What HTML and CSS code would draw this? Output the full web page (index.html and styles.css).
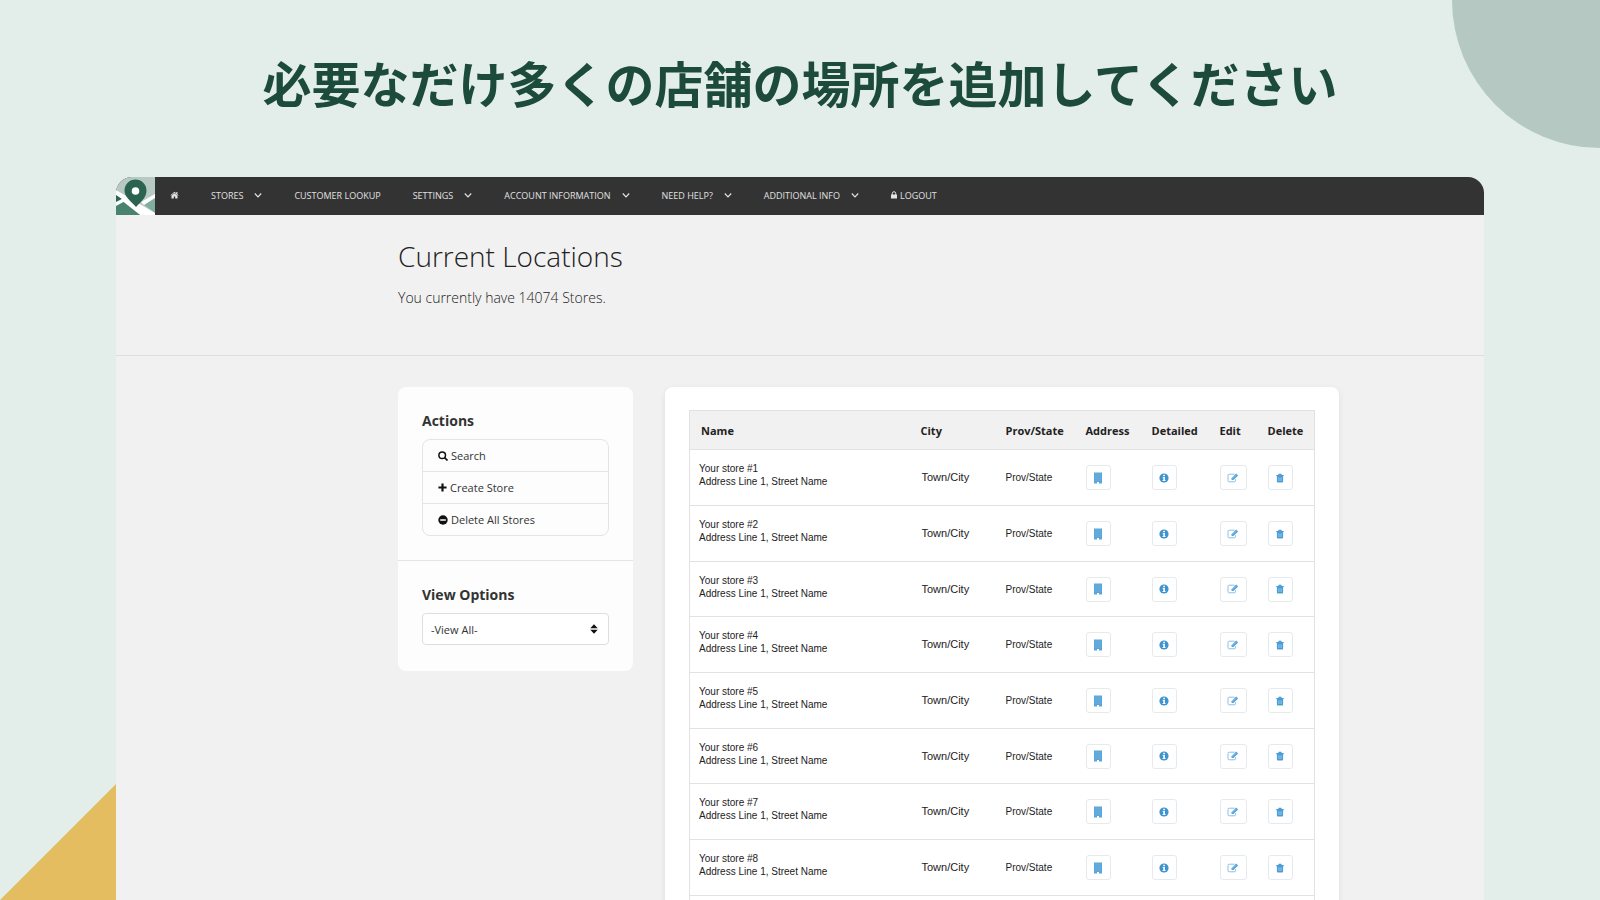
FILE: index.html
```html
<!DOCTYPE html>
<html lang="ja">
<head>
<meta charset="utf-8">
<title>Current Locations</title>
<link rel="stylesheet" href="styles.css">
</head>
<body>
<svg class="symbols" aria-hidden="true">
  <symbol id="chevron" viewBox="0 0 8 10"><path d="M.8 3.500 4 6.800 7.200 3.500" fill="none" stroke="currentColor" stroke-width="1.200"/></symbol>
  <symbol id="building" viewBox="0 0 10 12"><path d="M1 .5h8v11H6V10H4v1.500H1z" fill="#5aa6db"/><path d="M2.500 2.200h5M2.500 4.200h5M2.500 6.200h5M2.500 8.200h5" stroke="#86bfe6" stroke-width=".7" stroke-dasharray="1 1"/></symbol>
  <symbol id="info" viewBox="0 0 10 10"><circle cx="5" cy="5" r="4.600" fill="#3f93cf"/><path d="M4.200 1.800h1.700v1.400H4.200zM3.700 4.100h2.200v3h.6v1H3.600v-1h.7v-2h-.6z" fill="#fff"/></symbol>
  <symbol id="edit" viewBox="0 0 12 10"><path d="M7.500 1.200H2.300Q1 1.200 1 2.500v5Q1 8.800 2.300 8.800h5Q8.600 8.800 8.600 7.500V6.200" fill="none" stroke="#7db7e3" stroke-width=".9"/><path d="M4.600 5.200 9.200.6l1.900 1.800L6.400 7.100H4.600z" fill="#4a9dd6"/><path d="M5.300 5.900 9.600 1.800" stroke="#cfe5f5" stroke-width=".5"/></symbol>
  <symbol id="trash" viewBox="0 0 10 10"><path d="M1.200 2h2L3.700.7h2.600L6.800 2h2v1H1.200z" fill="#4a9dd6"/><path d="M1.900 3h6.200v5.500q0 1-1 1H2.900q-1 0-1-1z" fill="#4a9dd6"/><path d="M3.700 4.300v3.700M5 4.300v3.700M6.300 4.300v3.700" stroke="#a9d1ee" stroke-width=".6"/></symbol>
</svg>
<div class="circle"></div>
<div class="triangle"></div>
<h1 class="headline">必要なだけ多くの店舗の場所を追加してください</h1>
<div class="app">
  <nav class="nav">
    <a class="logo" href="#" aria-label="Store locator">
      <svg viewBox="0 0 39 38" preserveAspectRatio="none">
        <rect width="39" height="38" fill="#b6cac3"/>
        <path d="M0 20 39 42V38H0z" fill="#488370"/>
        <path d="M27 27 39 19v17z" fill="#7fae9f"/>
        <path d="M0 13 39 36v5H28L0 19z" fill="#fff"/>
        <path d="M25 25 39 17v4L28 28z" fill="#fff"/>
        <path d="M0 18 6 22 0 26z" fill="#2b6552"/>
        <path d="M0 25 8 21l3 2L0 29z" fill="#fff"/>
        <path d="M20 30C14 23 8.500 20 8.500 13.500a11 11 0 0 1 22 0C30.500 20 26 24 20 30z" fill="#2b6350"/>
        <circle cx="19.500" cy="14" r="3.800" fill="#fff"/>
      </svg>
    </a>
    <a href="#" aria-label="Home"><svg class="home" viewBox="0 0 10 9"><path d="M5 .8.5 4.700l.6.6L5 2l3.900 3.300.6-.6L8.300 3.600V1H7v1.500z" fill="#e4e4e4"/><path d="M5 2.500 1.600 5.300v3.200h2.600V6.200h1.600v2.300h2.600V5.300z" fill="#e4e4e4"/></svg></a>
    <a href="#">STORES<svg class="chev"><use href="#chevron"/></svg></a>
    <a href="#">CUSTOMER LOOKUP</a>
    <a href="#">SETTINGS<svg class="chev"><use href="#chevron"/></svg></a>
    <a href="#">ACCOUNT INFORMATION<svg class="chev"><use href="#chevron"/></svg></a>
    <a href="#">NEED HELP?<svg class="chev"><use href="#chevron"/></svg></a>
    <a href="#">ADDITIONAL INFO<svg class="chev"><use href="#chevron"/></svg></a>
    <a href="#"><svg class="lock" viewBox="0 0 6 8"><path d="M0 3.500h6V7.500H0z" fill="#e4e4e4"/><path d="M1.300 4V2.400a1.700 1.700 0 0 1 3.400 0V4" fill="none" stroke="#e4e4e4" stroke-width="1"/></svg>LOGOUT</a>
  </nav>
  <header class="intro">
    <h2>Current Locations</h2>
    <p>You currently have 14074 Stores.</p>
  </header>
  <main class="content">
    <aside class="sidebar">
      <section>
        <h3>Actions</h3>
        <ul class="actions">
          <li><a href="#"><svg viewBox="0 0 10 10"><circle cx="4.200" cy="4.200" r="3.300" fill="none" stroke="#111" stroke-width="1.500"/><path d="M6.500 6.500 9.500 9.500" stroke="#111" stroke-width="1.700"/></svg>Search</a></li>
          <li><a href="#"><svg class="plus" viewBox="0 0 10 10"><path d="M5 .5v9M.5 5h9" stroke="#111" stroke-width="2.400"/></svg>Create Store</a></li>
          <li><a href="#"><svg viewBox="0 0 10 10"><circle cx="5" cy="5" r="4.700" fill="#111"/><path d="M2.200 5h5.600" stroke="#fff" stroke-width="1.500"/></svg>Delete All Stores</a></li>
        </ul>
      </section>
      <section>
        <h3><label for="view">View Options</label></h3>
        <div class="picker">
          <select id="view"><option>-View All-</option></select>
          <svg viewBox="0 0 8 10"><path d="M4 .3 7.700 4.300H.3zM4 9.700.3 5.700h7.400z" fill="#111"/></svg>
        </div>
      </section>
    </aside>
    <div class="card">
      <table>
        <thead><tr><th class="name">Name</th><th class="city">City</th><th class="prov">Prov/State</th><th class="address">Address</th><th class="detailed">Detailed</th><th class="edit">Edit</th><th class="delete">Delete</th></tr></thead>
        <tbody id="stores"></tbody>
      </table>
    </div>
  </main>
</div>
<script src="stores.js"></script>
</body>
</html>
```
FILE: stores.js
```js
const body = document.getElementById('stores');
const action = (icon, label) =>
  `<td><button class="act ${icon}" type="button" aria-label="${label}"><svg><use href="#${icon}"/></svg></button></td>`;
for (let n = 1; n <= 9; n++) {
  body.insertAdjacentHTML('beforeend', `<tr>
    <td class="store">Your store #${n}<br>Address Line 1, Street Name</td>
    <td class="town">Town/City</td><td>Prov/State</td>
    ${action('building', 'Address')}${action('info', 'Detailed')}${action('edit', 'Edit')}${action('trash', 'Delete')}</tr>`);
}
```
FILE: styles.css
```css
* { box-sizing: border-box; }
body {
  margin: 0;
  height: 100vh;
  overflow: hidden;
  position: relative;
  display: flex;
  flex-direction: column;
  background: #e3edea;
  font-family: "Open Sans", sans-serif;
}
h1, h2, h3, p, ul { margin: 0; padding: 0; }
a { color: inherit; text-decoration: none; }
svg { display: block; flex: none; }
.symbols { position: absolute; width: 0; height: 0; }
.circle {
  position: absolute; top: 0; right: 0;
  width: 148px; height: 148px;
  background: #b5c9c2;
  border-bottom-left-radius: 100%;
}
.triangle {
  position: absolute; left: 0; bottom: 0;
  width: 116px; height: 116px;
  background: #e3bd5f;
  clip-path: polygon(100% 0, 100% 100%, 0 100%);
}
.headline {
  position: relative;
  padding: 46px 0 59px;
  text-align: center;
  font: bold 49px/72px "Noto Sans CJK JP", sans-serif;
  color: #1d4b3b;
}
.app {
  position: relative;
  flex: 1 1 0;
  min-height: 0;
  margin: 0 116px;
  background: #f1f1f1;
  border-radius: 16px 16px 0 0;
  overflow: hidden;
}
.nav {
  display: flex;
  align-items: center;
  gap: 32px;
  height: 38px;
  background: #333;
  color: #e0e0e0;
  font-size: 9px;
}
.nav a { display: flex; align-items: center; white-space: nowrap; height: 36px; align-self: flex-start; }
.nav .logo { width: 39px; height: 38px; margin-right: -17px; }
.logo svg { width: 100%; height: 100%; }
.home { width: 9px; height: 8px; }
.chev { width: 8px; height: 10px; margin-left: 11px; }
.lock { width: 6px; height: 8px; margin-right: 3px; }
.intro {
  height: 141px;
  padding: 20px 145px 0 282px;
  border-bottom: 1px solid #dedede;
  color: #222;
}
.intro h2 { font-size: 28px; line-height: 42px; font-weight: 300; }
.intro p { margin-top: 10px; font-size: 14px; line-height: 22px; font-weight: 300; }
.content {
  display: flex;
  align-items: flex-start;
  gap: 32px;
  padding: 31px 145px 0 282px;
}
.sidebar {
  flex: 0 0 235px;
  background: #fdfdfd;
  border-radius: 8px;
}
.sidebar section { padding: 24px; }
.sidebar section + section { padding-bottom: 26px; border-top: 1px solid #e4e4e4; }
.sidebar h3 { font-size: 14px; line-height: 20px; margin-bottom: 8px; color: #333; }
.actions { list-style: none; border: 1px solid #e4e4e4; border-radius: 8px; }
.actions li + li { border-top: 1px solid #e4e4e4; }
.actions a {
  display: flex; align-items: center; gap: 3px;
  height: 31px; padding-left: 15px;
  font-size: 11px; color: #333;
}
.actions svg { width: 10px; height: 10px; }
.actions .plus { width: 9px; height: 9px; }
.picker { position: relative; }
.picker select {
  display: block; width: 100%; height: 32px; padding: 0 8px;
  appearance: none;
  background: #fff; border: 1px solid #dedede; border-radius: 4px;
  font: 11px "Open Sans", sans-serif; color: #333;
}
.picker svg { position: absolute; right: 11px; top: 11px; width: 8px; height: 10px; pointer-events: none; }
.card {
  flex: 1;
  padding: 23px 24px 0;
  background: #fff;
  border-radius: 8px;
  box-shadow: 0 2px 6px rgba(0, 0, 0, .08);
}
table {
  width: 100%;
  table-layout: fixed;
  border-collapse: collapse;
  border: 1px solid #e2e2e2;
}
th {
  height: 39px; padding: 0 0 0 11px;
  background: #f1f1f1;
  text-align: left; font-size: 11px; color: #222;
}
.city { width: 85px; }
.prov { width: 80px; }
.address { width: 66px; }
.detailed { width: 68px; }
th.edit { width: 48px; }
.delete { width: 58px; }
td {
  height: 56px; padding: 0 0 0 11px;
  border-top: 1px solid #e2e2e2;
  font: 10px/13px "Liberation Sans", Arial, sans-serif;
  color: #222;
}
tr:nth-child(3n) td { height: 55px; }
td.store { padding: 0 0 5px 9px; }
td.town { font-size: 11px; padding-left: 12px; }
.act {
  display: flex; align-items: center; justify-content: center;
  width: 25px; height: 25px; padding: 0;
  background: #fff; border: 1px solid #e6eaec; border-radius: 3px;
}
.act.edit { width: 27px; }
.act svg { width: 10px; height: 10px; }
.act.building svg { height: 12px; }
.act.edit svg { width: 12px; }
```
